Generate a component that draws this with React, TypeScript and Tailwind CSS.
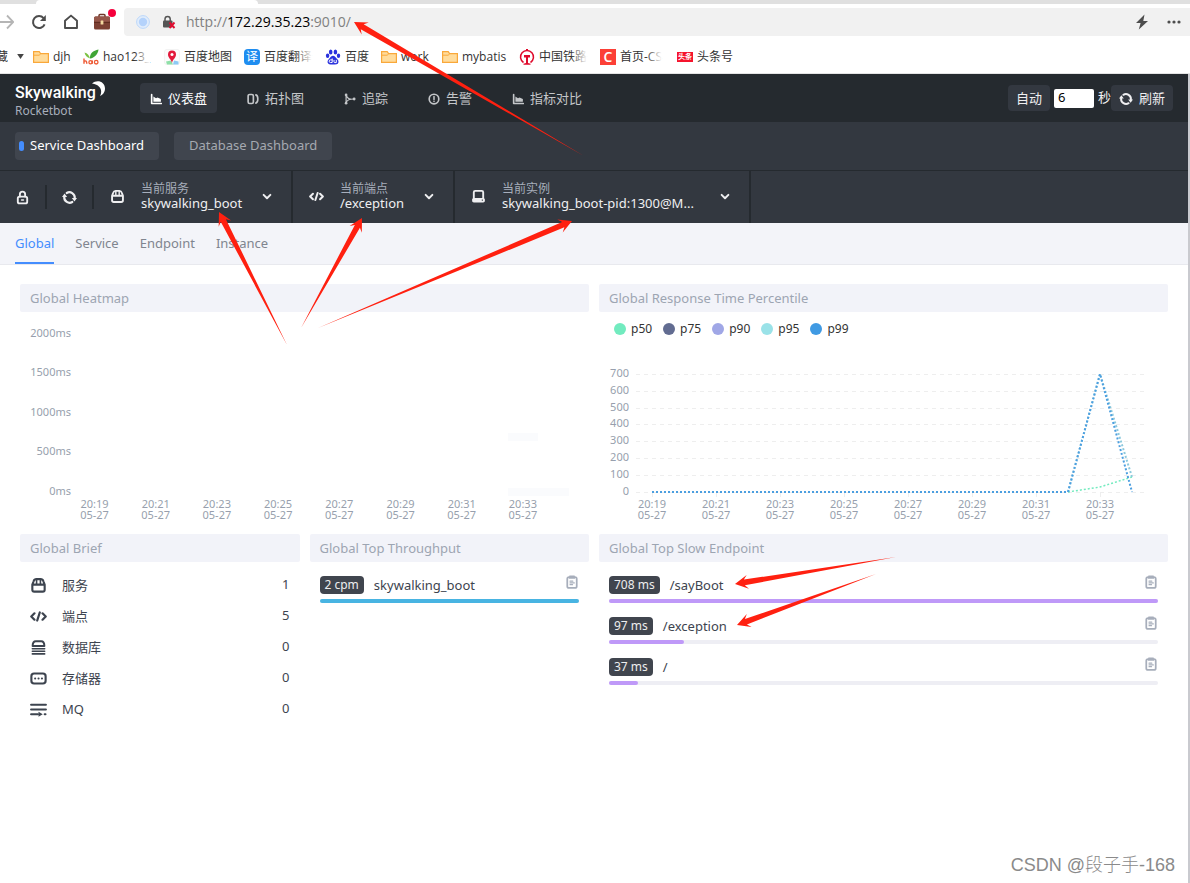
import React from "react";

type IconProps = { className?: string };

const FONT = "font-['Noto_Sans','Noto_Sans_CJK_SC',sans-serif]";

/* ---------- icons ---------- */

const stroke = {
  fill: "none",
  stroke: "currentColor",
  strokeLinecap: "round" as const,
  strokeLinejoin: "round" as const,
};

function Svg({ className = "size-4", children }: IconProps & { children: React.ReactNode }) {
  return (
    <svg viewBox="0 0 16 16" className={`shrink-0 ${className}`} aria-hidden="true">
      {children}
    </svg>
  );
}

const ChartIcon = (p: IconProps) => (
  <Svg {...p}>
    <path d="M2.200 2v12H15" {...stroke} strokeWidth="2.200" />
    <path d="M4.500 11.800V4.500l3.500 2.500 2-1 4.500 2v3.800z" fill="currentColor" />
  </Svg>
);
const TopologyIcon = (p: IconProps) => (
  <Svg {...p}>
    <rect x="1.500" y="2" width="7" height="12" rx="2" {...stroke} strokeWidth="2.200" />
    <path d="M11.800 2.500c3.500 1 3.500 10 0 11" {...stroke} strokeWidth="2.200" />
  </Svg>
);
const TraceIcon = (p: IconProps) => (
  <Svg {...p}>
    <path d="M2.800 2.500v11M3 12.500c1-3.500 4-4.500 10-4.500M3 3c1 3 3.500 5 6 5" {...stroke} strokeWidth="1.600" />
    <circle cx="2.800" cy="2.500" r="1.800" fill="currentColor" />
    <circle cx="2.800" cy="13.500" r="1.800" fill="currentColor" />
    <circle cx="13.500" cy="8" r="1.900" fill="currentColor" />
  </Svg>
);
const AlarmIcon = (p: IconProps) => (
  <Svg {...p}>
    <circle cx="8" cy="8" r="6.400" {...stroke} strokeWidth="2.200" />
    <path d="M8 4.500v4M8 11v.2" {...stroke} strokeWidth="2" />
  </Svg>
);
const SyncIcon = (p: IconProps) => (
  <Svg {...p}>
    <path d="M5 3.200A5.700 5.700 0 0 1 13.600 8.500M11 12.800A5.700 5.700 0 0 1 2.400 7.500" {...stroke} strokeWidth="2.300" />
    <path d="M10.500 8.500H16l-2.700 3.700zM0 7.500h5.500L2.700 3.800z" fill="currentColor" />
  </Svg>
);
const LockIcon = (p: IconProps) => (
  <Svg {...p}>
    <rect x="3" y="7" width="10" height="7.200" rx="1.800" {...stroke} strokeWidth="2" />
    <path d="M5.200 7V4.500a2.800 2.800 0 0 1 5.600 0V7" {...stroke} strokeWidth="2" />
    <path d="M7 10.600h2" {...stroke} strokeWidth="1.600" />
  </Svg>
);
const ServiceIcon = (p: IconProps) => (
  <Svg {...p}>
    <path d="M2.200 7.200L3.400 4C3.900 2.500 4.600 2 6 2h4c1.400 0 2.100.5 2.600 2l1.200 3.200v4.800c0 1.200-.7 1.800-1.800 1.800H4c-1.100 0-1.800-.6-1.800-1.800zM2.200 7.200h11.600" {...stroke} strokeWidth="2" />
    <path d="M6.200 2.500v4M9.800 2.500v4" {...stroke} strokeWidth="1.500" />
  </Svg>
);
const CodeIcon = (p: IconProps) => (
  <Svg {...p}>
    <path d="M4.200 5L1.200 8l3 3M11.800 5l3 3-3 3M9.200 4.200L6.800 11.800" {...stroke} strokeWidth="2.100" />
  </Svg>
);
const InstanceIcon = (p: IconProps) => (
  <Svg {...p}>
    <path d="M3 10V3.500C3 2.600 3.600 2 4.500 2h7c.9 0 1.500.6 1.500 1.500V10" {...stroke} strokeWidth="2" />
    <path d="M3 9.500h10c1 0 1.800.8 1.800 1.800v1.200c0 1-.8 1.800-1.800 1.800H3c-1 0-1.800-.8-1.800-1.800v-1.200c0-1 .8-1.800 1.800-1.800zm8.500 1.800v1.200h1.200v-1.200z" fill="currentColor" fillRule="evenodd" />
  </Svg>
);
const ChevronIcon = (p: IconProps) => (
  <Svg {...p}>
    <path d="M3.500 6.500L8 11l4.500-4.500" {...stroke} strokeWidth="2.600" />
  </Svg>
);
const DatabaseIcon = (p: IconProps) => (
  <Svg {...p}>
    <path d="M2.500 6.500C2.500 4 3.500 2.200 5.500 2.200h5c2 0 3 1.800 3 4.300z" {...stroke} strokeWidth="1.900" />
    <path d="M2.200 9.200h11.600M2.200 11.600h11.600M2.200 14h11.600" {...stroke} strokeWidth="1.500" />
  </Svg>
);
const StorageIcon = (p: IconProps) => (
  <Svg {...p}>
    <rect x="1.300" y="3.300" width="13.400" height="9.400" rx="2.500" {...stroke} strokeWidth="2" />
    <path d="M4.800 8h.1M8 8h.1M11.200 8h.1" {...stroke} strokeWidth="1.900" />
  </Svg>
);
const QueueIcon = (p: IconProps) => (
  <Svg {...p}>
    <path d="M1 3.500h14M1 8h14M1 12.500h6.500M13.800 12.500h.8" {...stroke} strokeWidth="1.900" />
    <path d="M8 10.200l4 2.300-4 2.300z" fill="currentColor" />
  </Svg>
);
const ClipboardIcon = (p: IconProps) => (
  <Svg {...p}>
    <rect x="2.600" y="2.400" width="10.800" height="12.400" rx="2" {...stroke} strokeWidth="2" />
    <path d="M5 .6h6l.6 3.600H4.400z" fill="currentColor" />
    <path d="M5.700 7h3.300M5.700 9h5M5.700 11h3" {...stroke} strokeWidth="1.200" />
  </Svg>
);
const FolderIcon = () => (
  <Svg className="size-4">
    <path d="M.6 13.400V2.600h5.600l1.400 2h7.800v8.800z" fill="#ffdc9c" stroke="#f9a83a" strokeWidth="1.200" />
    <path d="M.6 6.200h5.600l1.600-1.600" fill="none" stroke="#f9a83a" strokeWidth="1" />
  </Svg>
);
const HaoIcon = () => (
  <Svg className="size-4">
    <path d="M1.500 3.500c3 .5 4.500 2.500 5.500 6C4 8.500 2 6.500 1.500 3.500z" fill="#7cc242" />
    <path d="M7 9.500C6.500 4.500 10 1.500 15.500.5 15 5 11.500 9 7 9.500z" fill="#3fa535" />
    <path d="M1 9.500v5.300M1 12.500c1.600-1.200 2.800-.6 2.800 2.300M9.300 11.500v3.300" fill="none" stroke="#ee5a35" strokeWidth="1.400" />
    <circle cx="7.500" cy="13.200" r="1.600" fill="none" stroke="#ee5a35" strokeWidth="1.300" />
    <circle cx="13.200" cy="13.200" r="1.800" fill="none" stroke="#ee5a35" strokeWidth="1.300" />
  </Svg>
);
const MapIcon = () => (
  <Svg className="size-4">
    <rect x=".5" y=".5" width="15" height="15" rx="2" fill="#fbfbfb" stroke="#ececec" strokeWidth=".6" />
    <path d="M2 12.500l5-1 2 4H3z" fill="#8fe0a8" />
    <path d="M9 15.500l1-4 4.500 1v3z" fill="#8ccaf5" />
    <path d="M8 14C7.300 10.500 4 9 4 5.600a4 4 0 0 1 8 0C12 9 8.700 10.500 8 14z" fill="#e3193b" />
    <circle cx="8" cy="5.500" r="1.500" fill="#fff" />
  </Svg>
);
const PawIcon = () => (
  <Svg className="size-4">
    <g fill="#2a32dd">
      <ellipse cx="5.700" cy="3" rx="1.800" ry="2.500" />
      <ellipse cx="10.400" cy="3" rx="1.800" ry="2.500" />
      <ellipse cx="2.600" cy="6.800" rx="1.700" ry="2.200" />
      <ellipse cx="13.500" cy="6.800" rx="1.700" ry="2.200" />
      <path d="M8 6.800c1.600 0 2.200 1.300 3.400 2.500 1.400 1.300 2.400 2.300 2 4.100-.4 2-2.700 2.200-5.400 2.200s-5 .1-5.400-2c-.3-1.800.7-2.900 2-4.300C5.800 8 6.400 6.800 8 6.800z" />
    </g>
    <path d="M7.200 9.500v4H5.500a1.200 1.200 0 0 1 0-2.600h1.700M9 10.900v2c0 .5.300.7.800.7h1.500v-2.700" fill="none" stroke="#fff" strokeWidth="1" />
  </Svg>
);
const RailIcon = () => (
  <Svg className="size-4">
    <path d="M4.500 13.500A6.500 6.500 0 1 1 11.500 13.500" fill="none" stroke="#df0a2c" strokeWidth="1.500" />
    <path d="M5 6h6v2.500H9V14l2.500.8v1h-7v-1L7 14V8.500H5zM7 0h2v2H7z" fill="#df0a2c" />
  </Svg>
);

/* ---------- browser chrome ---------- */

function BrowserChrome() {
  return (
    <div className="bg-white font-['Open_Sans','Noto_Sans_CJK_SC',sans-serif]">
      <div className="flex h-1 bg-[#e0e0e0]">
        <div className="ml-9 w-[222px] rounded-t-sm bg-white" />
      </div>
      <div className="flex h-9 items-center text-[#555]">
        <div className="flex w-[124px] shrink-0 items-center">
          <button aria-label="Forward" className="w-[14px]">
            <svg viewBox="0 0 14 16" className="h-4 w-[14px]">
              <path d="M0 8h13M7 1.500L13.300 8 7 14.500" fill="none" stroke="#b5b5b5" strokeWidth="1.800" />
            </svg>
          </button>
          <button aria-label="Reload" className="ml-[17px]">
            <Svg>
              <path d="M13.600 10.300A6 6 0 1 1 12.600 4.200" fill="none" stroke="#4d4d4d" strokeWidth="2" />
              <path d="M14.800 1v6H9z" fill="#4d4d4d" />
            </Svg>
          </button>
          <button aria-label="Home" className="ml-4">
            <Svg>
              <path d="M2 14V6.800L8 1.600l6 5.200V14z" fill="none" stroke="#4d4d4d" strokeWidth="1.900" strokeLinejoin="round" />
            </Svg>
          </button>
          <button aria-label="Toolbox" className="relative ml-[14px]">
            <svg viewBox="0 0 18 18" className="size-[18px]">
              <path d="M6 4V2.500C6 2 6.400 1.500 7 1.500h4c.6 0 1 .5 1 1V4" fill="none" stroke="#70372a" strokeWidth="1.500" />
              <rect x="1" y="3.500" width="16" height="13" rx="1.500" fill="#7c4033" />
              <rect x="1" y="3.500" width="16" height="5.500" rx="1.500" fill="#96574a" />
              <path d="M1 9.300h16" stroke="#5c281d" strokeWidth="1" />
              <rect x="7.600" y="7.500" width="2.800" height="4" rx=".5" fill="#f3d8a0" />
            </svg>
            <span className="absolute -top-1 left-[15px] size-2 rounded-full bg-[#f5003c]" />
          </button>
        </div>
        <div className="flex h-7 flex-1 items-center rounded-l bg-[#f1f1f1] pl-3 pr-2">
          <svg viewBox="0 0 14 14" className="size-[14px]" aria-hidden="true">
            <circle cx="7" cy="7" r="6.400" fill="#e2edfb" stroke="#bcd7fa" />
            <circle cx="7" cy="7" r="4.200" fill="#b4d2fb" />
          </svg>
          <svg viewBox="0 0 14 14" className="ml-3 size-[14px]" aria-hidden="true">
            <path d="M3 6V4a2.600 2.600 0 0 1 5.200 0v2" fill="none" stroke="#555" strokeWidth="1.500" />
            <rect x="1" y="5.500" width="9.500" height="7" rx="1" fill="#555" />
            <path d="M7.500 7.500l5 5.500M12.500 7.500l-5 5.500" stroke="#e00b2f" strokeWidth="1.900" />
          </svg>
          <span className="ml-[10px] flex-1 text-sm text-[#808080]">
            http://<span className="text-black">172.29.35.23</span>:9010/
          </span>
          <button aria-label="Speed mode">
            <Svg>
              <path d="M10.500.5L2 9h4.600L4.800 15.500 14 7H9.300z" fill="#4d4d4d" />
            </Svg>
          </button>
          <button aria-label="More" className="ml-4">
            <Svg>
              <g fill="#4d4d4d">
                <circle cx="3" cy="8" r="1.600" />
                <circle cx="8" cy="8" r="1.600" />
                <circle cx="13" cy="8" r="1.600" />
              </g>
            </Svg>
          </button>
        </div>
      </div>
      <nav className="flex h-[34px] items-center overflow-hidden border-b border-[#e4e4e4] text-xs text-[#333]">
        <a href="#fav" className="flex w-[33px] shrink-0 items-center">
          <span className="flex w-2 justify-end overflow-hidden">藏</span>
          <svg viewBox="0 0 8 6" className="ml-[9px] h-[5px] w-[7px]" aria-hidden="true">
            <path d="M0 0h8L4 6z" fill="#444" />
          </svg>
        </a>
        <Bookmark width="w-[50px]" icon={<FolderIcon />} label="djh" />
        <Bookmark width="w-[81px]" icon={<HaoIcon />} label="hao123_" fade />
        <Bookmark width="w-[80px]" icon={<MapIcon />} label="百度地图" />
        <Bookmark
          width="w-[81px]"
          icon={<span className="flex size-4 shrink-0 items-center justify-center rounded-sm bg-[#1e8df0] text-xs text-white">译</span>}
          label="百度翻译"
          fade
        />
        <Bookmark width="w-[56px]" icon={<PawIcon />} label="百度" />
        <Bookmark width="w-[61px]" icon={<FolderIcon />} label="work" />
        <Bookmark width="w-[77px]" icon={<FolderIcon />} label="mybatis" />
        <Bookmark width="w-[81px]" icon={<RailIcon />} label="中国铁路" fade />
        <Bookmark
          width="w-[77px]"
          icon={<span className="flex size-4 shrink-0 items-center justify-center bg-[#fc3f36] text-sm font-semibold text-white">C</span>}
          label="首页-CS"
          fade
        />
        <Bookmark
          width="w-[70px]"
          icon={<span className="flex h-[10px] w-4 shrink-0 items-center justify-center bg-[#f5142d] text-[7px] font-bold text-white">头条</span>}
          label="头条号"
        />
      </nav>
    </div>
  );
}

function Bookmark({ icon, label, width, fade }: { icon: React.ReactNode; label: string; width: string; fade?: boolean }) {
  return (
    <a href="#bookmark" className={`flex shrink-0 items-center gap-1 ${width}`}>
      {icon}
      <span className="relative whitespace-nowrap">
        {label}
        {fade && <span className="absolute inset-y-0 right-0 w-4 bg-linear-to-r from-transparent to-white" />}
      </span>
    </a>
  );
}

/* ---------- application header ---------- */

const NAV = [
  { label: "仪表盘", Icon: ChartIcon, active: true },
  { label: "拓扑图", Icon: TopologyIcon },
  { label: "追踪", Icon: TraceIcon },
  { label: "告警", Icon: AlarmIcon },
  { label: "指标对比", Icon: ChartIcon },
];

function Header() {
  return (
    <header className="flex h-12 items-center bg-[#252a2f] px-[15px] text-[13px] text-[#efeff1]">
      <a href="#home" className="relative w-[125px] shrink-0 pt-2">
        <span className="block font-[Roboto] text-base leading-[18px] font-medium text-white">Skywalking</span>
        <span className="block text-xs leading-[18px] text-[#a7aebb]">Rocketbot</span>
        <svg viewBox="0 0 16 18" className="absolute top-1 left-[76px] h-[18px] w-4" aria-hidden="true">
          <path d="M1 3.500C6-1 14 1.500 14 8.500c0 4-2.500 6.500-5 7.500 2.500-4.500 1.500-11-8-12.500z" fill="#fff" />
        </svg>
      </a>
      <nav className="flex gap-5">
        {NAV.map(({ label, Icon, active }) => (
          <a
            key={label}
            href="#nav"
            className={`flex h-[30px] items-center gap-[6px] rounded px-[10px] pt-px ${active ? "bg-[#333840] text-white" : "text-[#c4c6c9]"}`}
          >
            <Icon className="size-3" />
            {label}
          </a>
        ))}
      </nav>
      <div className="ml-auto flex items-center">
        <button className="h-[26px] rounded bg-[#333840] px-2 pt-px">自动</button>
        <input
          aria-label="刷新间隔"
          defaultValue="6"
          className="mx-1 h-[19px] w-10 rounded-xs bg-white px-1 text-[13px] text-black"
        />
        <span>秒</span>
        <button className="flex h-[26px] items-center gap-[6px] rounded bg-[#333840] px-2 pt-px">
          <SyncIcon className="size-[14px]" />
          刷新
        </button>
      </div>
    </header>
  );
}

function DashboardTabs() {
  return (
    <div className="flex h-12 items-center gap-[15px] bg-[#333840] px-[15px] text-[13px]">
      <a href="#service" className="flex h-7 items-center gap-[6px] rounded bg-[#40454e] pl-1 pr-[15px] text-white">
        <span className="h-[10px] w-[5px] rounded-full bg-[#448dfe]" />
        Service Dashboard
      </a>
      <a href="#database" className="flex h-7 items-center rounded bg-[#40454e] px-[15px] text-[#a5a9b1]">
        Database Dashboard
      </a>
    </div>
  );
}

function Selector({ Icon, label, value, width }: { Icon: React.FC<IconProps>; label: string; value: string; width: string }) {
  return (
    <button className={`flex items-center border-r-2 border-[#252a2f] pb-[2px] pl-4 pr-[18px] text-left ${width}`}>
      <Icon className="size-[15px]" />
      <span className="ml-4 flex-1 whitespace-nowrap">
        <span className="block text-xs leading-[15px] text-[#a7aebb]">{label}</span>
        <span className="block text-[13px] leading-[15px]">{value}</span>
      </span>
      <ChevronIcon className="size-3" />
    </button>
  );
}

function Toolbar() {
  return (
    <div className="flex h-[53px] border-t border-[#252a2f] bg-[#333840] text-[#efeff1]">
      <div className="flex items-center">
        <button aria-label="Lock" className="flex h-6 w-[47px] items-center justify-center border-r-2 border-[#252a2f]">
          <LockIcon className="size-[15px]" />
        </button>
        <button aria-label="Reload" className="flex h-6 w-[47px] items-center justify-center border-r-2 border-[#252a2f]">
          <SyncIcon className="size-[15px]" />
        </button>
      </div>
      <Selector Icon={ServiceIcon} label="当前服务" value="skywalking_boot" width="w-[199px]" />
      <Selector Icon={CodeIcon} label="当前端点" value="/exception" width="w-[162px]" />
      <Selector Icon={InstanceIcon} label="当前实例" value="skywalking_boot-pid:1300@M..." width="w-[296px]" />
    </div>
  );
}

function PageTabs() {
  return (
    <nav className="flex h-[42px] gap-[21px] border-b border-[#e8e9ee] bg-[#f3f4f9] px-[15px] text-[13px] text-[#80858f]">
      {["Global", "Service", "Endpoint", "Instance"].map((t, i) => (
        <a
          key={t}
          href="#tab"
          className={`flex items-center border-b-2 pt-[2px] ${i === 0 ? "border-[#448dfe] text-[#448dfe]" : "border-transparent"}`}
        >
          {t}
        </a>
      ))}
    </nav>
  );
}

/* ---------- panels ---------- */

function Panel({ title, className = "", children }: { title: string; className?: string; children: React.ReactNode }) {
  return (
    <section className={className}>
      <h2 className="h-7 rounded-xs bg-[#f2f3f9] px-[10px] text-[13px] leading-7 text-[#9da5b2]">{title}</h2>
      {children}
    </section>
  );
}

const TIMES = ["20:19", "20:21", "20:23", "20:25", "20:27", "20:29", "20:31", "20:33"];

function TimeAxis({ start, step, y }: { start: number; step: number; y: number }) {
  return (
    <g textAnchor="middle">
      {TIMES.map((t, i) => (
        <g key={t}>
          <text x={start + step * i} y={y}>{t}</text>
          <text x={start + step * i} y={y + 11}>05-27</text>
        </g>
      ))}
    </g>
  );
}

function Heatmap() {
  const levels = ["2000ms", "1500ms", "1000ms", "500ms", "0ms"];
  return (
    <svg viewBox="0 0 569 212" className="w-full text-[11px]" fill="#979fad" role="img" aria-label="Global Heatmap">
      <g textAnchor="end">
        {levels.map((l, i) => (
          <text key={l} x="51" y={Math.floor(25 + i * 39.5)}>{l}</text>
        ))}
      </g>
      <rect x="488" y="121" width="30" height="8" fill="#fafbfd" />
      <rect x="488" y="176" width="61" height="8" fill="#fafbfd" />
      <TimeAxis start={74.5} step={61.2} y={196} />
    </svg>
  );
}

const LEGEND = [
  { label: "p50", dot: "bg-[#72ebbf]" },
  { label: "p75", dot: "bg-[#626c91]" },
  { label: "p90", dot: "bg-[#a0a7e6]" },
  { label: "p95", dot: "bg-[#9ae2e8]" },
  { label: "p99", dot: "bg-[#409ae3]" },
];

function Percentile() {
  const ticks = [700, 600, 500, 400, 300, 200, 100, 0];
  return (
    <div>
      <ul className="flex h-[34px] items-center gap-[11px] pl-[15px] text-xs text-[#333]">
        {LEGEND.map(({ label, dot }) => (
          <li key={label} className="flex items-center gap-[5px]">
            <span className={`size-3 rounded-full ${dot}`} />
            {label}
          </li>
        ))}
      </ul>
      <svg viewBox="0 0 569 178" className="w-full text-[11px]" fill="#979fad" role="img" aria-label="Global Response Time Percentile">
        {ticks.map((t, i) => {
          const y = Math.round(28 + i * 16.8) + 0.5;
          return (
            <g key={t}>
              <text x="30" y={y + 2.5} textAnchor="end">{t}</text>
              <path d={`M37 ${y}H546`} stroke="#eeeeee" strokeDasharray="4 4" />
            </g>
          );
        })}
        {TIMES.map((t, i) => (
          <path key={t} d={`M${53.5 + i * 64} 146v5`} stroke="#eeeeee" />
        ))}
        <g fill="none" strokeWidth="2" strokeDasharray="2 2">
          <path d="M53 146H469L501 141L533 131" stroke="#72ebbf" strokeWidth="1.500" />
          <path d="M53 146H469L501 28L533 131" stroke="#8cc9dc" />
          <path d="M53 146H469L501 28L533 146" stroke="#4c9fe0" />
        </g>
        <TimeAxis start={53} step={64} y={162} />
      </svg>
    </div>
  );
}

const BRIEF = [
  { label: "服务", Icon: ServiceIcon, value: 1 },
  { label: "端点", Icon: CodeIcon, value: 5 },
  { label: "数据库", Icon: DatabaseIcon, value: 0 },
  { label: "存储器", Icon: StorageIcon, value: 0 },
  { label: "MQ", Icon: QueueIcon, value: 0 },
];

function RankRow({ badge, name, percent, bar }: { badge: string; name: string; percent: number; bar: string }) {
  return (
    <li className="h-[41px]">
      <div className="flex h-[18px] items-center text-[13px] text-[#3d444f]">
        <span className="rounded bg-[#40454e] px-[5px] text-xs leading-[18px] text-[#eeeeee]">{badge}</span>
        <span className="ml-[10px] flex-1 pt-px">{name}</span>
        <button aria-label={`Copy ${name}`} className="mb-[6px] text-[#a7aebb]">
          <ClipboardIcon className="size-[14px]" />
        </button>
      </div>
      <div className="mt-[5px] h-1 rounded-full bg-[#eeeef4]">
        <div className={`h-1 rounded-full ${bar}`} style={{ width: `${percent}%` }} />
      </div>
    </li>
  );
}

/* ---------- hand-drawn pointers ---------- */

const ARROWS: [number, number, number, number][] = [
  [584, 156, 354, 22],
  [287, 345, 219, 212],
  [301, 328, 362, 218],
  [318, 328, 572, 221],
  [896, 557, 735, 584],
  [876, 574, 737, 625],
];

function Pointers() {
  return (
    <svg className="pointer-events-none absolute inset-0 h-full w-full" aria-hidden="true">
      {ARROWS.map(([x1, y1, x2, y2], i) => {
        const len = Math.hypot(x2 - x1, y2 - y1);
        const ux = (x2 - x1) / len;
        const uy = (y2 - y1) / len;
        const pt = (back: number, side: number) => `${x2 - ux * back - uy * side} ${y2 - uy * back + ux * side}`;
        return (
          <path
            key={i}
            d={`M${x1} ${y1}L${pt(9.5, 2.9)}L${pt(13, 7)}L${pt(0, 0)}L${pt(13, -7)}L${pt(9.5, -2.9)}Z`}
            fill="#ff2010"
          />
        );
      })}
    </svg>
  );
}

export default function App() {
  return (
    <div className={`relative flex min-h-screen flex-col overflow-hidden bg-white ${FONT}`}>
      <BrowserChrome />
      <div className="flex flex-1 border-r-2 border-[#c9cacf]">
        <main className="min-w-0 flex-1">
          <Header />
          <DashboardTabs />
          <Toolbar />
          <PageTabs />
          <div className="grid grid-cols-4 gap-[10px] px-5 pt-[19px]">
            <Panel title="Global Heatmap" className="col-span-2">
              <Heatmap />
            </Panel>
            <Panel title="Global Response Time Percentile" className="col-span-2">
              <Percentile />
            </Panel>
            <Panel title="Global Brief">
              <ul className="px-[10px] pt-2 text-[13px] text-[#3d444f]">
                {BRIEF.map(({ label, Icon, value }) => (
                  <li key={label} className="flex h-[31px] items-center">
                    <Icon className="size-[17px]" />
                    <span className="ml-[15px] flex-1">{label}</span>
                    <span className="pb-[2px]">{value}</span>
                  </li>
                ))}
              </ul>
            </Panel>
            <Panel title="Global Top Throughput">
              <ul className="px-[10px] pt-[14px]">
                <RankRow badge="2 cpm" name="skywalking_boot" percent={100} bar="bg-[#48b4e2]" />
              </ul>
            </Panel>
            <Panel title="Global Top Slow Endpoint" className="col-span-2">
              <ul className="px-[10px] pt-[14px]">
                <RankRow badge="708 ms" name="/sayBoot" percent={100} bar="bg-[#bf99f8]" />
                <RankRow badge="97 ms" name="/exception" percent={13.7} bar="bg-[#bf99f8]" />
                <RankRow badge="37 ms" name="/" percent={5.2} bar="bg-[#bf99f8]" />
              </ul>
            </Panel>
          </div>
        </main>
      </div>
      <p className="absolute right-[15px] bottom-1 font-['Liberation_Sans','Noto_Sans_CJK_SC',sans-serif] text-lg leading-7 font-light text-[#8a8a8a]">
        CSDN @段子手-168
      </p>
      <Pointers />
    </div>
  );
}
